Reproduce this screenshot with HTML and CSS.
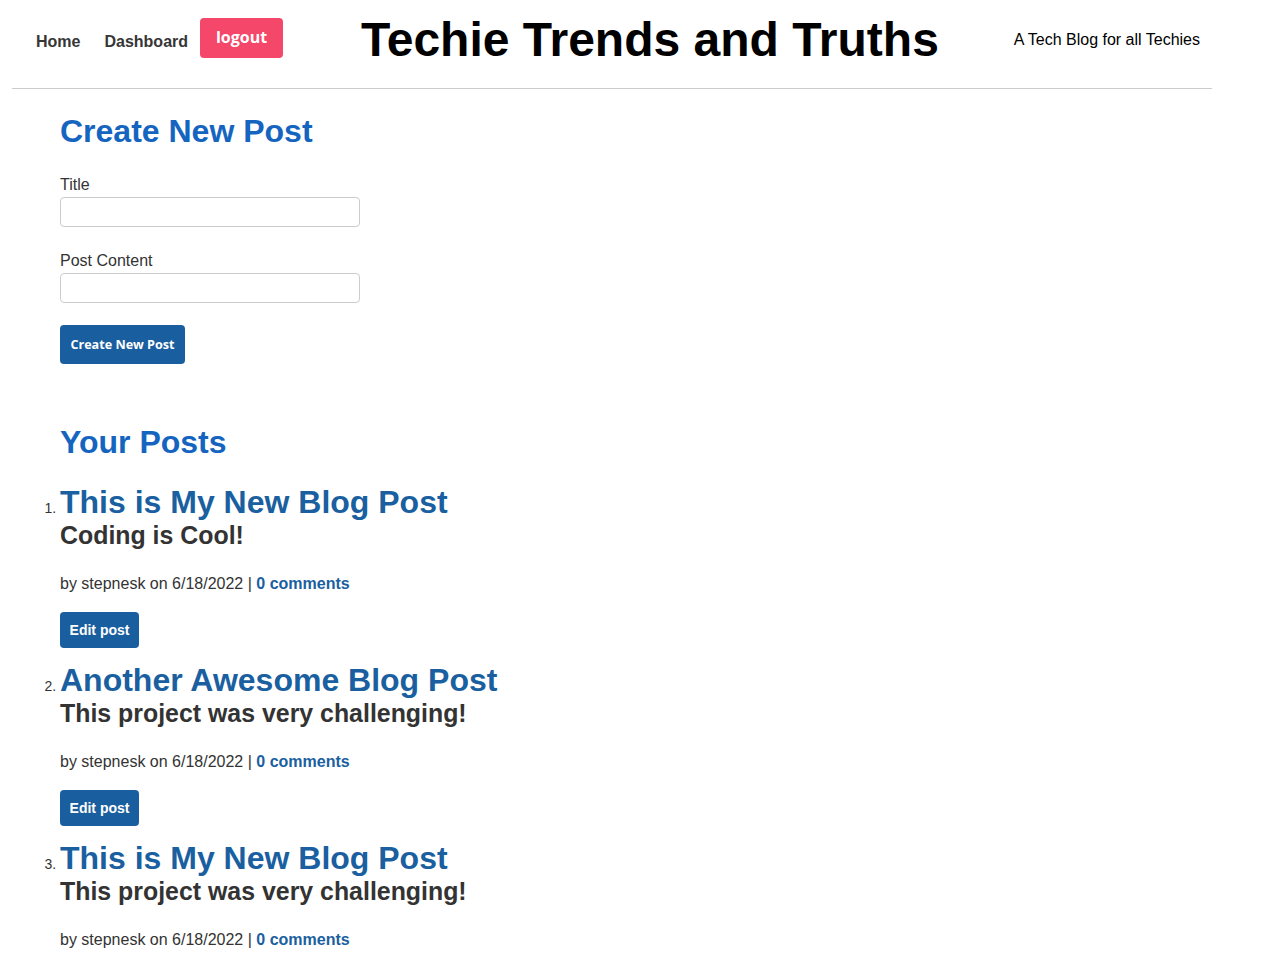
FILE: index.html
```html
<!DOCTYPE html>
<html lang="en">
<head>
<meta charset="utf-8">
<title>Techie Trends and Truths</title>
<link rel="stylesheet" href="styles.css">
</head>
<body>
<header class="site-header">
  <nav class="nav">
    <a class="nav-link" href="#">Home</a>
    <a class="nav-link" href="#">Dashboard</a>
    <button class="btn-logout" type="button">logout</button>
  </nav>
  <h1 class="site-title">Techie Trends and Truths</h1>
  <p class="tagline">A Tech Blog for all Techies</p>
</header>
<main class="main">
  <section class="create">
    <h2 class="section-title">Create New Post</h2>
    <form class="post-form">
      <label class="field">
        <span class="field-label">Title</span>
        <input class="field-input" type="text">
      </label>
      <label class="field field-last">
        <span class="field-label">Post Content</span>
        <input class="field-input" type="text">
      </label>
      <button class="btn-create" type="button">Create New Post</button>
    </form>
  </section>
  <section class="posts">
    <h2 class="section-title">Your Posts</h2>
    <ol class="post-list">
      <li class="post">
        <h3 class="post-title">This is My New Blog Post</h3>
        <p class="post-body">Coding is Cool!</p>
        <p class="post-meta">by stepnesk on 6/18/2022 | <a class="comments" href="#">0 comments</a></p>
        <button class="btn-edit" type="button">Edit post</button>
      </li>
      <li class="post">
        <h3 class="post-title">Another Awesome Blog Post</h3>
        <p class="post-body">This project was very challenging!</p>
        <p class="post-meta">by stepnesk on 6/18/2022 | <a class="comments" href="#">0 comments</a></p>
        <button class="btn-edit" type="button">Edit post</button>
      </li>
      <li class="post">
        <h3 class="post-title">This is My New Blog Post</h3>
        <p class="post-body">This project was very challenging!</p>
        <p class="post-meta">by stepnesk on 6/18/2022 | <a class="comments" href="#">0 comments</a></p>
        <button class="btn-edit" type="button">Edit post</button>
      </li>
    </ol>
  </section>
</main>
</body>
</html>
```
FILE: styles.css
```css
* { box-sizing: border-box; }
html, body { margin: 0; padding: 0; background: #fff; }
body {
  font-family: "Liberation Sans", Arial, sans-serif;
  color: #333;
  font-size: 16px;
}
.site-header {
  width: 1200px;
  margin: 0 0 0 12px;
  height: 89px;
  border-bottom: 1px solid #ccc;
  display: flex;
  align-items: center;
  justify-content: space-between;
  padding: 0 12px 10px 24px;
}
.nav { display: flex; align-items: center; }
.nav-link {
  color: #363636;
  font-weight: bold;
  text-decoration: none;
  font-size: 16px;
  margin-right: 24px;
  padding-top: 5px;
}
.btn-logout {
  font-family: "Open Sans", "Liberation Sans", sans-serif;
  font-weight: bold;
  font-size: 16px;
  color: #fff;
  background: #f54769;
  border: none;
  border-radius: 4px;
  width: 83px;
  height: 40px;
  padding: 0 0 3px;
  margin-left: -12px;
  margin-top: -2px;
}
.site-title {
  margin: 0 0 0 3px;
  font-size: 48px;
  font-weight: bold;
  color: #000;
}
.tagline { margin: 0; padding-top: 2px; font-size: 16px; color: #000; }
.main { padding: 0 0 0 60px; }
.section-title {
  margin: 24px 0 0;
  font-size: 32px;
  font-weight: bold;
  color: #1565c0;
  line-height: 37px;
}
.post-form { margin-top: 26px; }
.field { display: block; margin-bottom: 25px; }
.field-last { margin-bottom: 22px; }
.field-label { display: block; font-size: 16px; color: #333; line-height: 18px; margin-bottom: 3px; }
.field-input {
  display: block;
  width: 300px;
  height: 30px;
  border: 1px solid #ccc;
  border-radius: 4px;
}
.btn-create {
  font-family: "Open Sans", "Liberation Sans", sans-serif;
  font-weight: bold;
  font-size: 12.6px;
  color: #fff;
  background: #195e9e;
  border: none;
  border-radius: 4px;
  width: 125px;
  height: 39px;
  padding: 0 0 1px;
}
.posts { margin-top: 60px; }
.post-list { margin: 24px 0 0; padding: 0; }
.post::marker { font-size: 14px; color: #333; }
.post-title {
  margin: 0;
  font-size: 32px;
  font-weight: bold;
  color: #1a5fa0;
  line-height: 34px;
}
.post-body {
  margin: 1px 0 0;
  font-size: 24.9px;
  font-weight: bold;
  color: #333;
  line-height: 30px;
}
.post-meta { margin: 25px 0 0; font-size: 16px; line-height: 18px; }
.comments { color: #1a5fa0; font-weight: bold; text-decoration: none; }
.btn-edit {
  margin-top: 19px;
  margin-bottom: 15px;
  font-family: "Liberation Sans", Arial, sans-serif;
  font-weight: bold;
  font-size: 14px;
  color: #fff;
  background: #195e9e;
  border: none;
  border-radius: 4px;
  width: 79px;
  height: 36px;
  padding: 0;
}
```
